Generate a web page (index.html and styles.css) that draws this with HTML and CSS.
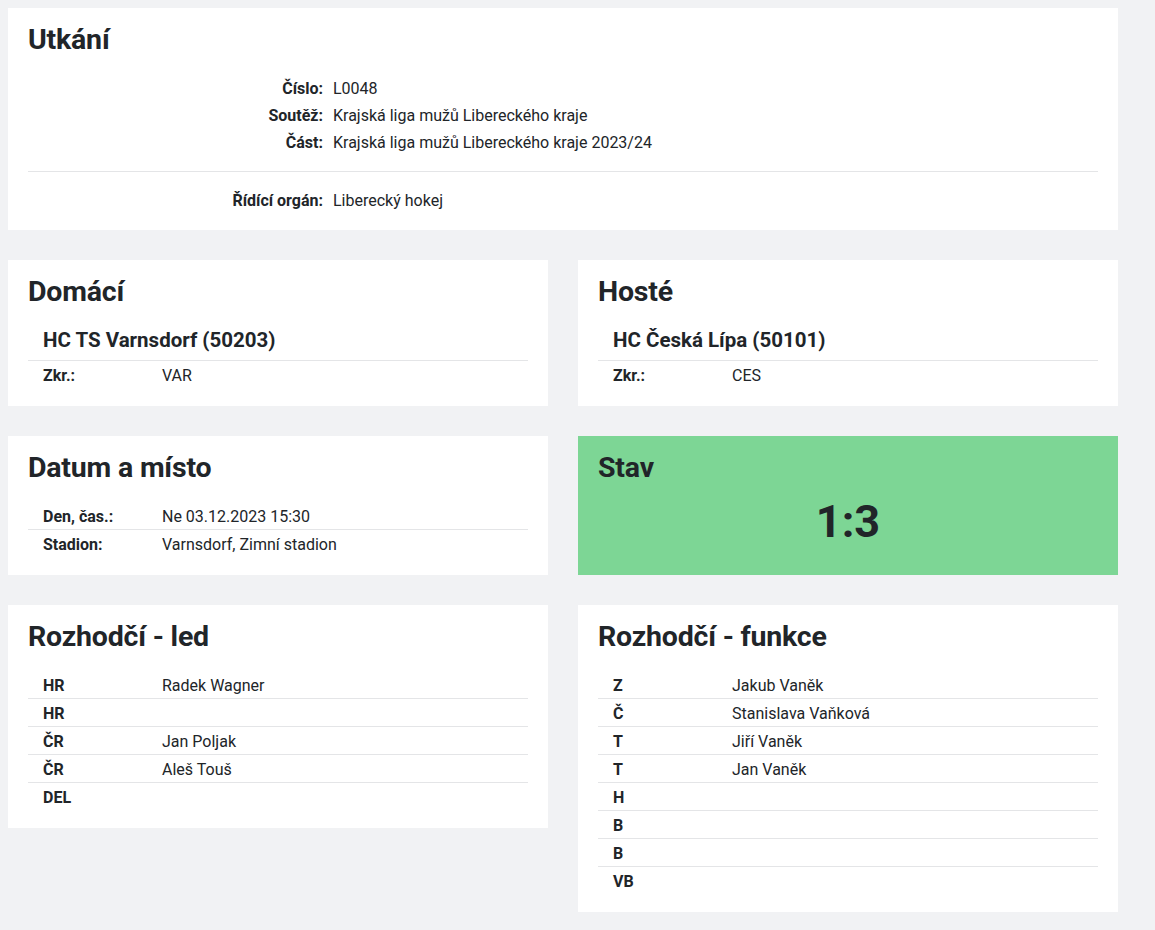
FILE: index.html
```html
<!DOCTYPE html>
<html lang="cs">
<head>
<meta charset="utf-8">
<title>Utkání</title>
<link rel="stylesheet" href="styles.css">
</head>
<body>
<div class="page">
  <section class="card">
    <h2 class="card-title">Utkání</h2>
    <div class="info">
      <div class="info-row"><span class="info-label">Číslo:</span><span class="info-value">L0048</span></div>
      <div class="info-row"><span class="info-label">Soutěž:</span><span class="info-value">Krajská liga mužů Libereckého kraje</span></div>
      <div class="info-row"><span class="info-label">Část:</span><span class="info-value">Krajská liga mužů Libereckého kraje 2023/24</span></div>
    </div>
    <hr class="divider">
    <div class="info">
      <div class="info-row"><span class="info-label">Řídící orgán:</span><span class="info-value">Liberecký hokej</span></div>
    </div>
  </section>

  <div class="row">
    <section class="card">
      <h2 class="card-title">Domácí</h2>
      <h3 class="team-name">HC TS Varnsdorf (50203)</h3>
      <div class="table">
        <div class="t-row"><span class="t-label">Zkr.:</span><span class="t-value">VAR</span></div>
      </div>
    </section>
    <section class="card">
      <h2 class="card-title">Hosté</h2>
      <h3 class="team-name">HC Česká Lípa (50101)</h3>
      <div class="table">
        <div class="t-row"><span class="t-label">Zkr.:</span><span class="t-value">CES</span></div>
      </div>
    </section>
  </div>

  <div class="row">
    <section class="card">
      <h2 class="card-title">Datum a místo</h2>
      <div class="table">
        <div class="t-row"><span class="t-label">Den, čas.:</span><span class="t-value">Ne 03.12.2023 15:30</span></div>
        <div class="t-row"><span class="t-label">Stadion:</span><span class="t-value">Varnsdorf, Zimní stadion</span></div>
      </div>
    </section>
    <section class="card card-score">
      <h2 class="card-title">Stav</h2>
      <div class="score">1:3</div>
    </section>
  </div>

  <div class="row row-start">
    <section class="card">
      <h2 class="card-title">Rozhodčí - led</h2>
      <div class="table">
        <div class="t-row"><span class="t-label">HR</span><span class="t-value">Radek Wagner</span></div>
        <div class="t-row"><span class="t-label">HR</span><span class="t-value"></span></div>
        <div class="t-row"><span class="t-label">ČR</span><span class="t-value">Jan Poljak</span></div>
        <div class="t-row"><span class="t-label">ČR</span><span class="t-value">Aleš Touš</span></div>
        <div class="t-row"><span class="t-label">DEL</span><span class="t-value"></span></div>
      </div>
    </section>
    <section class="card">
      <h2 class="card-title">Rozhodčí - funkce</h2>
      <div class="table">
        <div class="t-row"><span class="t-label">Z</span><span class="t-value">Jakub Vaněk</span></div>
        <div class="t-row"><span class="t-label">Č</span><span class="t-value">Stanislava Vaňková</span></div>
        <div class="t-row"><span class="t-label">T</span><span class="t-value">Jiří Vaněk</span></div>
        <div class="t-row"><span class="t-label">T</span><span class="t-value">Jan Vaněk</span></div>
        <div class="t-row"><span class="t-label">H</span><span class="t-value"></span></div>
        <div class="t-row"><span class="t-label">B</span><span class="t-value"></span></div>
        <div class="t-row"><span class="t-label">B</span><span class="t-value"></span></div>
        <div class="t-row"><span class="t-label">VB</span><span class="t-value"></span></div>
      </div>
    </section>
  </div>
</div>
</body>
</html>
```

FILE: styles.css
```css
* { box-sizing: border-box; }

body {
  margin: 8px;
  background: #f1f2f4;
  color: #212529;
  font-family: Roboto, "Liberation Sans", sans-serif;
  font-size: 16px;
}

.page {
  width: 1110px;
  display: flex;
  flex-direction: column;
  gap: 30px;
  padding-bottom: 18px;
}

.row {
  display: grid;
  grid-template-columns: 540px 540px;
  gap: 30px;
}

.row-start { align-items: start; }

.card {
  background: #fff;
  padding: 16px 20px 17px;
}

.card-title {
  margin: 0 0 18px;
  font-size: 28.5px;
  line-height: 32px;
  font-weight: 700;
  letter-spacing: -0.2px;
}

.info-row {
  display: grid;
  grid-template-columns: 295px 1fr;
  column-gap: 10px;
  height: 27px;
  padding-top: 1px;
  align-items: center;
}

.info-label {
  text-align: right;
  font-weight: 700;
}

.divider {
  border: 0;
  border-top: 1px solid #e4e5e7;
  margin: 16px 0 14px;
}

.team-name {
  margin: 0;
  padding: 0 15px 6px;
  font-size: 20.5px;
  line-height: 28px;
  font-weight: 700;
  border-bottom: 1px solid #e4e5e7;
}

.t-row {
  display: grid;
  grid-template-columns: 134px 1fr;
  height: 28px;
  align-items: center;
  border-bottom: 1px solid #e4e5e7;
  padding-top: 1px;
}

.t-row:last-child { border-bottom: 0; }

.t-label {
  padding-left: 15px;
  font-weight: 700;
}

.card-score {
  background: #7dd695;
}

.score {
  text-align: center;
  font-size: 45px;
  line-height: 56px;
  font-weight: 700;
  margin-top: -8px;
}
```
